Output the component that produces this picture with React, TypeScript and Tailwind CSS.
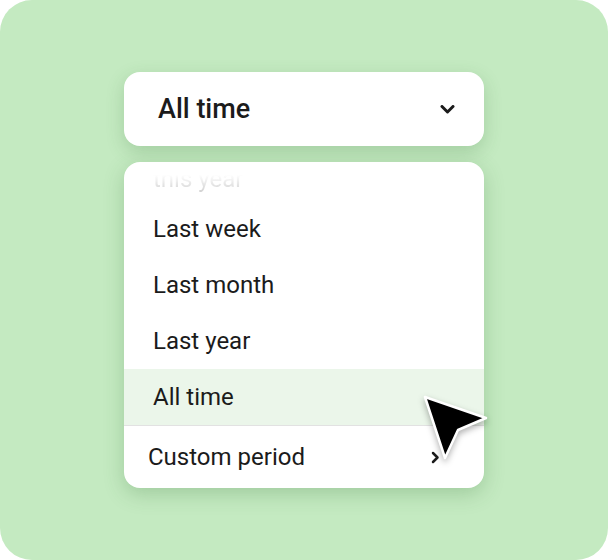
import React from 'react'

const items = ['Last week', 'Last month', 'Last year', 'All time']

export default function App() {
  const selected = 'All time'

  return (
    <div className="min-h-screen bg-white">
      <div
        className="relative flex h-[560px] w-[608px] flex-col items-center rounded-[32px] bg-[#c4eac1] pt-[72px] text-[#1b1b1b]"
        style={{ fontFamily: 'Roboto, "Noto Sans", sans-serif' }}
      >
        {/* Select trigger */}
        <button className="flex h-[74px] w-[360px] items-center justify-between rounded-2xl bg-white pl-[34px] pr-[29px] shadow-[0_6px_18px_rgba(50,110,50,0.22)]">
          <span className="text-[27px] font-medium leading-none">All time</span>
          <svg width="15" height="9" viewBox="0 0 15 9" fill="none">
            <polyline points="2,1.5 7.5,7 13,1.5" stroke="#1b1b1b" strokeWidth="3" strokeLinecap="round" strokeLinejoin="round" />
          </svg>
        </button>

        {/* Dropdown */}
        <div className="mt-4 w-[360px] overflow-hidden rounded-2xl bg-white shadow-[0_6px_20px_rgba(50,110,50,0.25)]">
          <div className="h-[39px] pl-[29px] text-[24px] leading-[35px]">
            <span className="bg-gradient-to-b from-white from-[35%] to-[#cfcfcf] bg-clip-text text-transparent">this year</span>
          </div>
          {items.map((label) => (
            <div
              key={label}
              className={
                'h-[56px] pl-[29px] text-[24px] leading-[56px] ' +
                (label === selected ? 'bg-[#ebf6ea]' : '')
              }
            >
              {label}
            </div>
          ))}
          <div className="h-px bg-[#e2e2e2]" />
          <div className="flex h-[62px] items-center justify-between pl-[24px] pr-[44px]">
            <span className="text-[24px] leading-[62px]">Custom period</span>
            <svg width="9" height="13" viewBox="0 0 9 13" fill="none">
              <polyline points="2,2 6.5,6.5 2,11" stroke="#1b1b1b" strokeWidth="2.5" strokeLinecap="round" strokeLinejoin="round" />
            </svg>
          </div>
        </div>

        {/* Mouse cursor */}
        <svg
          className="absolute left-[416px] top-[388px]"
          width="80"
          height="80"
          viewBox="0 0 80 80"
          style={{ filter: 'drop-shadow(0 3px 3px rgba(0,0,0,0.3))' }}
        >
          <polygon
            points="9,9 70,30 42,42 29,70"
            fill="#000"
            stroke="#fff"
            strokeWidth="2.5"
            strokeLinejoin="round"
          />
        </svg>
      </div>
    </div>
  )
}
